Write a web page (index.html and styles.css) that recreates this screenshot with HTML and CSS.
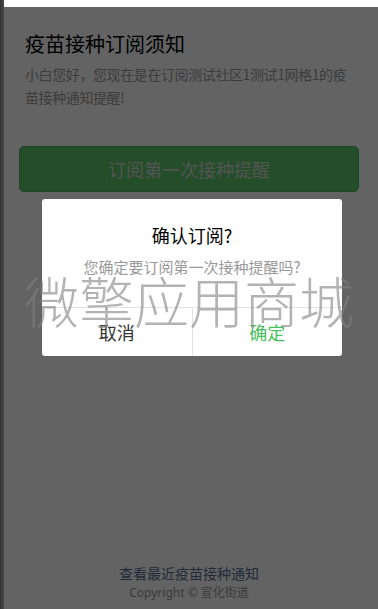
FILE: index.html
```html
<!DOCTYPE html>
<html lang="zh-CN">
<head>
<meta charset="utf-8">
<title>疫苗接种订阅须知</title>
<link rel="stylesheet" href="styles.css">
</head>
<body>
<div class="page">
  <main class="main">
    <h1 class="title">疫苗接种订阅须知</h1>
    <p class="desc">小白您好，您现在是在订阅测试社区1测试1网格1的疫苗接种通知提醒!</p>
    <button class="btn-primary">订阅第一次接种提醒</button>
  </main>
  <footer class="footer">
    <a class="footer-link">查看最近疫苗接种通知</a>
    <p class="copyright">Copyright © 宣化街道</p>
  </footer>
</div>

<div class="mask"></div>
<div class="edge"></div>

<div class="dialog">
  <div class="dialog-hd">确认订阅?</div>
  <div class="dialog-bd">您确定要订阅第一次接种提醒吗?</div>
  <div class="dialog-ft">
    <a class="dialog-btn dialog-btn-default">取消</a>
    <a class="dialog-btn dialog-btn-primary">确定</a>
  </div>
</div>

<div class="watermark">微擎应用商城</div>
</body>
</html>
```

FILE: styles.css
```css
* { box-sizing: border-box; }
html, body { margin: 0; padding: 0; height: 100%; }
body {
  font-family: "Noto Sans CJK SC", "Noto Sans", sans-serif;
  background: #fff;
  color: #000;
}
.page {
  min-height: 609px;
  display: flex;
  flex-direction: column;
}
.main {
  padding: 30px 25px 0 25px;
}
.title {
  margin: 0;
  font-size: 20px;
  line-height: 28px;
  font-weight: 400;
  color: #000;
}
.desc {
  margin: 5px 0 0 0;
  font-size: 14px;
  line-height: 23px;
  letter-spacing: -0.4px;
  color: #9a9a9a;
}
.btn-primary {
  display: block;
  width: calc(100% + 12px);
  margin: 37px -6px 0 -6px;
  height: 46px;
  border: 1px solid #4fb85c;
  border-radius: 5px;
  background: #5ac86a;
  color: #d8d8d8;
  font-family: inherit;
  font-size: 18px;
}
.footer {
  margin-top: auto;
  padding-bottom: 6px;
  text-align: center;
  font-family: "Noto Sans", "Noto Sans CJK SC", sans-serif;
}
.footer-link {
  display: block;
  font-size: 14px;
  line-height: 20px;
  color: #586c94;
  font-family: "Noto Sans CJK SC", sans-serif;
}
.copyright {
  margin: 0;
  font-size: 12px;
  line-height: 20px;
  color: #999;
}
.mask {
  position: fixed;
  left: 0; right: 0; bottom: 0; top: 7px;
  background: rgba(0, 0, 0, 0.61);
}
.edge {
  position: fixed;
  left: 0; top: 0; bottom: 0;
  width: 4px;
  background: linear-gradient(to right, #333, #484848);
}
.dialog {
  position: fixed;
  top: 199px;
  left: 42px;
  width: 300px;
  background: #fff;
  border-radius: 3px;
  text-align: center;
}
.dialog-hd {
  padding-top: 22px;
  font-size: 18px;
  line-height: 28px;
  font-weight: 400;
  color: #000;
}
.dialog-bd {
  margin-top: 7px;
  padding-bottom: 29px;
  font-size: 15px;
  line-height: 22px;
  color: #999;
}
.dialog-ft {
  display: flex;
  border-top: 1px solid #e2e2e2;
}
.dialog-btn {
  flex: 1;
  height: 48px;
  line-height: 48px;
  font-size: 18px;
}
.dialog-btn + .dialog-btn {
  border-left: 1px solid #e2e2e2;
}
.dialog-btn-default { color: #353535; }
.dialog-btn-primary { color: #45c05a; }
.watermark {
  position: fixed;
  top: 266px;
  left: 0; right: 0;
  text-align: center;
  font-size: 55px;
  line-height: 66px;
  font-weight: 300;
  color: rgba(128, 128, 128, 0.6);
  pointer-events: none;
  white-space: nowrap;
}
```
